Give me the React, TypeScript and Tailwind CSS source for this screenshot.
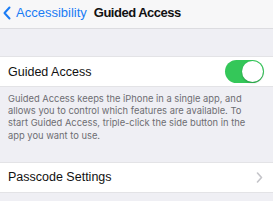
import React from "react";

export default function App() {
  return (
    <div
      className="w-[273px] h-[201px] overflow-hidden bg-[#efeff4] flex flex-col"
      style={{ fontFamily: '"Liberation Sans", Arial, sans-serif' }}
    >
      <div className="h-[29px] shrink-0 bg-[#f7f7f8] border-b border-[#dcdce0] flex items-center pb-[3px]">
        <svg width="10" height="14" viewBox="0 0 10 14" className="ml-[2px] mt-[1px]">
          <path d="M7.5 1.5 L2.5 7 L7.5 12.5" fill="none" stroke="#1a7cf5" strokeWidth="2" strokeLinecap="round" strokeLinejoin="round" />
        </svg>
        <span className="ml-[4px] text-[13px] leading-none text-[#1a7cf5]">Accessibility</span>
        <span className="ml-[7px] text-[13px] leading-none font-bold text-[#111] tracking-[-0.5px]">Guided Access</span>
      </div>
      <div className="h-[27px] shrink-0" />
      <div className="h-[31px] shrink-0 bg-white border-y border-[#e3e3e6] flex items-center justify-between pl-[8px] pr-[9px]">
        <span className="text-[12.5px] leading-none text-[#111] mt-[1px]">Guided Access</span>
        <div className="w-[39px] h-[23px] rounded-full bg-[#34c759] flex items-center justify-end pr-[1px]">
          <div className="w-[21px] h-[21px] rounded-full bg-white shadow-[0_1px_2px_rgba(0,0,0,0.25)]" />
        </div>
      </div>
      <div
        className="h-[75px] shrink-0 pl-[8px] pt-[6px] text-[9.35px] leading-[12.2px] text-[#6d6d72] whitespace-nowrap"
        style={{ fontFamily: 'Inter, "Liberation Sans", sans-serif' }}
      >
        <div>Guided Access keeps the iPhone in a single app, and</div>
        <div>allows you to control which features are available. To</div>
        <div>start Guided Access, triple-click the side button in the</div>
        <div>app you want to use.</div>
      </div>
      <div className="h-[31px] shrink-0 bg-white border-y border-[#e3e3e6] flex items-center justify-between pl-[8px] pr-[10px]">
        <span className="text-[12.5px] leading-none text-[#111]">Passcode Settings</span>
        <svg width="7" height="11" viewBox="0 0 7 11">
          <path d="M1.5 1 L5.5 5.5 L1.5 10" fill="none" stroke="#c4c4c9" strokeWidth="1.6" strokeLinecap="round" strokeLinejoin="round" />
        </svg>
      </div>
    </div>
  );
}
